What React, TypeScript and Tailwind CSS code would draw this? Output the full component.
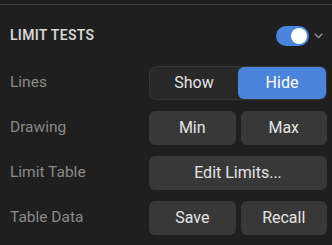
import React, { useState } from 'react';

const font = { fontFamily: 'Roboto, "Liberation Sans", sans-serif' };

export default function App() {
  const [enabled, setEnabled] = useState(true);
  const [lines, setLines] = useState<'show' | 'hide'>('hide');

  const btn =
    'h-[34px] rounded-[6px] bg-[#383838] text-[16px] text-[#e4e4e4] flex items-center justify-center';

  return (
    <div className="w-[332px] h-[245px] bg-[#1f1f1f] overflow-hidden" style={font}>
      <div className="pt-[4px]">
        <div className="h-px bg-[#3a3a3a]" />
      </div>

      {/* Section header */}
      <div className="h-[61px] flex items-center justify-between pl-[10px] pr-[9px]">
        <span className="text-[14px] font-semibold tracking-[0.3px] text-[#d6d6d6]">LIMIT TESTS</span>
        <div className="flex items-center gap-[5px]">
          <button
            onClick={() => setEnabled(!enabled)}
            className={`w-[33px] h-[20px] rounded-full flex items-center px-[2px] ${
              enabled ? 'bg-[#4a84dc] justify-end' : 'bg-[#444] justify-start'
            }`}
          >
            <span className="w-[16px] h-[16px] rounded-full bg-white" />
          </button>
          <svg width="9" height="6" viewBox="0 0 9 6" fill="none">
            <path d="M0.8 0.8 L4.5 4.6 L8.2 0.8" stroke="#9a9a9a" strokeWidth="1.3" />
          </svg>
        </div>
      </div>

      {/* Rows */}
      <div className="grid grid-cols-[139px_1fr] gap-y-[11px] pl-[10px] pr-[5px] items-center">
        <span className="text-[15.5px] text-[#8a8a8a]">Lines</span>
        <div className="h-[34px] rounded-[7px] bg-[#282828] border border-[#363636] flex">
          <button
            onClick={() => setLines('show')}
            className={`flex-1 rounded-[6px] text-[16px] ${
              lines === 'show' ? 'bg-[#4a84dc] text-white' : 'text-[#e4e4e4]'
            }`}
          >
            Show
          </button>
          <button
            onClick={() => setLines('hide')}
            className={`flex-1 rounded-[6px] text-[16px] ${
              lines === 'hide' ? 'bg-[#4a84dc] text-white' : 'text-[#e4e4e4]'
            }`}
          >
            Hide
          </button>
        </div>

        <span className="text-[15.5px] text-[#8a8a8a]">Drawing</span>
        <div className="grid grid-cols-2 gap-[5px]">
          <button className={btn}>Min</button>
          <button className={btn}>Max</button>
        </div>

        <span className="text-[15.5px] text-[#8a8a8a]">Limit Table</span>
        <button className={btn}>Edit Limits...</button>

        <span className="text-[15.5px] text-[#8a8a8a]">Table Data</span>
        <div className="grid grid-cols-2 gap-[5px]">
          <button className={btn}>Save</button>
          <button className={btn}>Recall</button>
        </div>
      </div>
    </div>
  );
}
